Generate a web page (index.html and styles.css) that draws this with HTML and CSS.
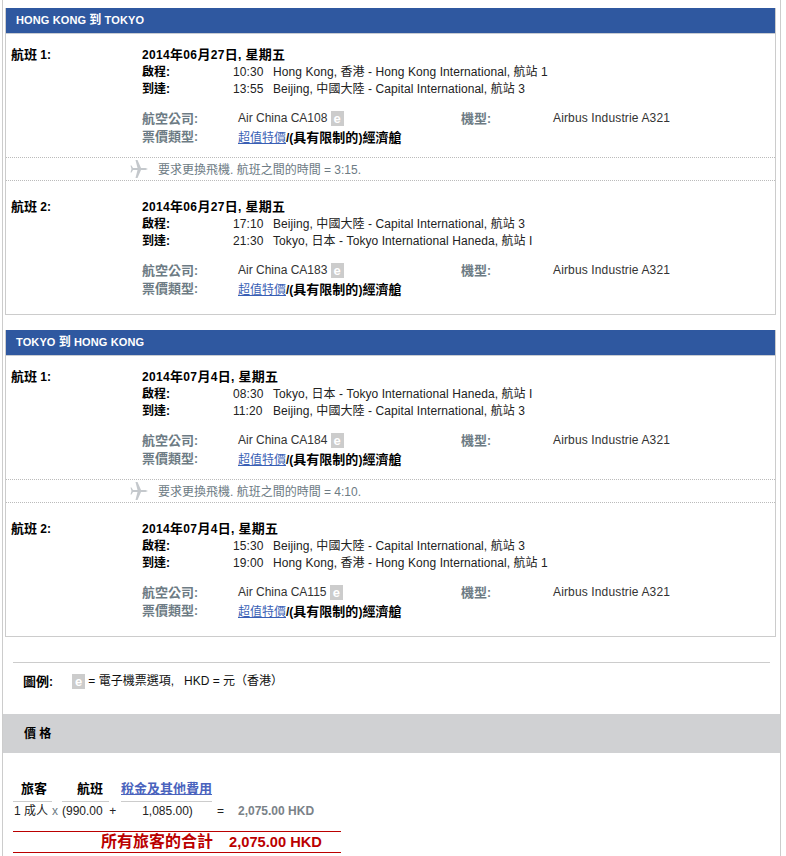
FILE: index.html
```html
<!DOCTYPE html>
<html lang="zh-Hant">
<head>
<meta charset="utf-8">
<title>航班</title>
<link rel="stylesheet" href="styles.css">
</head>
<body>
<div class="frame">
  <section class="card">
    <h2 class="card-head">HONG KONG <span class="zh12">到</span> TOKYO</h2>
    <div class="leg">
      <div class="leg-no"><span class="zh">航班</span> 1:</div>
      <div class="leg-main">
        <div class="date">2014<span class="zh">年</span>06<span class="zh">月</span>27<span class="zh">日</span>, <span class="zh">星期五</span></div>
        <div class="stop"><b>啟程:</b><span class="time">10:30</span><span>Hong Kong, 香港 - Hong Kong International, 航站 1</span></div>
        <div class="stop"><b>到達:</b><span class="time">13:55</span><span>Beijing, 中國大陸 - Capital International, 航站 3</span></div>
        <div class="info"><b class="lbl"><span class="zh">航空公司</span>:</b><span class="val">Air China CA108 <i class="e">e</i></span><b class="lbl lbl2"><span class="zh">機型</span>:</b><span class="model">Airbus Industrie A321</span></div>
        <div class="info fare"><b class="lbl"><span class="zh">票價類型</span>:</b><span class="val"><a href="#">超值特價</a><b>/(<span class="zh">具有限制的</span>)<span class="zh">經濟艙</span></b></span></div>
      </div>
    </div>
    <div class="change"><svg class="plane" viewBox="0 0 18 18"><path d="M18 9 15.500 8H11L7.500 0h-2l2 8H3L1.500 5.500h-1l1 3.500-1 3.500h1L3 10h4.500l-2 8h2L11 10h4.500z"/></svg><span class="change-text">要求更換飛機. 航班之間的時間 = 3:15.</span></div>
    <div class="leg leg-next">
      <div class="leg-no"><span class="zh">航班</span> 2:</div>
      <div class="leg-main">
        <div class="date">2014<span class="zh">年</span>06<span class="zh">月</span>27<span class="zh">日</span>, <span class="zh">星期五</span></div>
        <div class="stop"><b>啟程:</b><span class="time">17:10</span><span>Beijing, 中國大陸 - Capital International, 航站 3</span></div>
        <div class="stop"><b>到達:</b><span class="time">21:30</span><span>Tokyo, 日本 - Tokyo International Haneda, 航站 I</span></div>
        <div class="info"><b class="lbl"><span class="zh">航空公司</span>:</b><span class="val">Air China CA183 <i class="e">e</i></span><b class="lbl lbl2"><span class="zh">機型</span>:</b><span class="model">Airbus Industrie A321</span></div>
        <div class="info fare"><b class="lbl"><span class="zh">票價類型</span>:</b><span class="val"><a href="#">超值特價</a><b>/(<span class="zh">具有限制的</span>)<span class="zh">經濟艙</span></b></span></div>
      </div>
    </div>
  </section>

  <section class="card card-2">
    <h2 class="card-head">TOKYO <span class="zh12">到</span> HONG KONG</h2>
    <div class="leg">
      <div class="leg-no"><span class="zh">航班</span> 1:</div>
      <div class="leg-main">
        <div class="date">2014<span class="zh">年</span>07<span class="zh">月</span>4<span class="zh">日</span>, <span class="zh">星期五</span></div>
        <div class="stop"><b>啟程:</b><span class="time">08:30</span><span>Tokyo, 日本 - Tokyo International Haneda, 航站 I</span></div>
        <div class="stop"><b>到達:</b><span class="time">11:20</span><span>Beijing, 中國大陸 - Capital International, 航站 3</span></div>
        <div class="info"><b class="lbl"><span class="zh">航空公司</span>:</b><span class="val">Air China CA184 <i class="e">e</i></span><b class="lbl lbl2"><span class="zh">機型</span>:</b><span class="model">Airbus Industrie A321</span></div>
        <div class="info fare"><b class="lbl"><span class="zh">票價類型</span>:</b><span class="val"><a href="#">超值特價</a><b>/(<span class="zh">具有限制的</span>)<span class="zh">經濟艙</span></b></span></div>
      </div>
    </div>
    <div class="change"><svg class="plane" viewBox="0 0 18 18"><path d="M18 9 15.500 8H11L7.500 0h-2l2 8H3L1.500 5.500h-1l1 3.500-1 3.500h1L3 10h4.500l-2 8h2L11 10h4.500z"/></svg><span class="change-text">要求更換飛機. 航班之間的時間 = 4:10.</span></div>
    <div class="leg leg-next">
      <div class="leg-no"><span class="zh">航班</span> 2:</div>
      <div class="leg-main">
        <div class="date">2014<span class="zh">年</span>07<span class="zh">月</span>4<span class="zh">日</span>, <span class="zh">星期五</span></div>
        <div class="stop"><b>啟程:</b><span class="time">15:30</span><span>Beijing, 中國大陸 - Capital International, 航站 3</span></div>
        <div class="stop"><b>到達:</b><span class="time">19:00</span><span>Hong Kong, 香港 - Hong Kong International, 航站 1</span></div>
        <div class="info"><b class="lbl"><span class="zh">航空公司</span>:</b><span class="val">Air China CA115 <i class="e">e</i></span><b class="lbl lbl2"><span class="zh">機型</span>:</b><span class="model">Airbus Industrie A321</span></div>
        <div class="info fare"><b class="lbl"><span class="zh">票價類型</span>:</b><span class="val"><a href="#">超值特價</a><b>/(<span class="zh">具有限制的</span>)<span class="zh">經濟艙</span></b></span></div>
      </div>
    </div>
  </section>

  <div class="legend">
    <b class="legend-title"><span class="zh">圖例</span>:</b>
    <span><i class="e">e</i> = 電子機票選項,&nbsp;&nbsp;&nbsp;HKD&nbsp;= 元（香港）</span>
  </div>

  <div class="price-bar"><b>價 格</b></div>

  <div class="price">
    <div class="price-row price-head">
      <b class="c1">旅客</b><b class="cx"></b><b class="c2">航班</b><a class="c3" href="#">稅金及其他費用</a>
    </div>
    <div class="price-row price-vals">
      <span class="c1">1 成人</span><span class="cx">x</span><span class="c2">(990.00&nbsp;&nbsp;+</span><span class="c3 num">1,085.00)</span><span class="eq">=</span><span class="sum">2,075.00 HKD</span>
    </div>
    <div class="total"><span class="total-zh">所有旅客的合計</span><span>2,075.00 HKD</span></div>
  </div>
</div>
</body>
</html>
```
FILE: styles.css
```css
* { box-sizing: border-box; }
html, body { margin: 0; padding: 0; background: #fff; }
body {
  width: 786px;
  height: 856px;
  overflow: hidden;
  font: 12px/17px "Liberation Sans", "Noto Sans CJK TC", sans-serif;
  color: #222;
}
b { color: #000; }
.zh { font-size: 13px; }
.zh12 { font-size: 12px; }
.frame {
  margin-left: 2px;
  width: 779px;
  height: 856px;
  padding: 8px 5px 0 2px;
  border-left: 1px solid #ccc;
  border-right: 1px solid #ccc;
}
.card { width: 771px; height: 307px; border: 1px solid #ccc; border-top: 0; }
.card-2 { margin-top: 15px; }
.card-head {
  margin: 0;
  height: 26px;
  padding-left: 10px;
  background: #2f58a0;
  border-bottom: 1px solid #c8ccd2;
  color: #fff;
  font-size: 11px;
  font-weight: bold;
  line-height: 25px;
  letter-spacing: .12px;
}
.leg { display: flex; padding: 13px 5px 0; height: 123px; }
.leg-next { padding-top: 18px; height: 133px; }
.leg-no { width: 131px; height: 16px; margin-top: -1px; font-weight: bold; color: #000; }
.leg-main { flex: 1; }
.date { height: 18px; margin-top: -1px; font-weight: bold; color: #000; letter-spacing: .33px; }
.stop { display: flex; letter-spacing: .075px; }
.stop b { width: 91px; letter-spacing: 0; }
.time { width: 40px; }
.info { display: flex; margin-top: 12px; height: 17px; color: #333; }
.fare { margin-top: 2px; }
.fare .lbl { margin-top: -1px; }
.lbl { width: 96px; color: #6d7b84; }
.val { width: 223px; }
.lbl2 { width: 92px; }
.model { letter-spacing: .14px; }
.val a { color: #3a5fb5; }
.e {
  display: inline-block;
  width: 13px;
  height: 15px;
  background: #ccc;
  color: #fff;
  font: bold 13px/15px "Liberation Sans", sans-serif;
  text-align: center;
  vertical-align: top;
  margin-top: 1px;
}
.change {
  display: flex;
  align-items: center;
  height: 24px;
  padding-left: 124px;
  border-top: 1px dotted #bbb;
  border-bottom: 1px dotted #bbb;
  color: #6d7b84;
}
.change-text { padding-top: 2px; }
.plane { width: 18px; height: 18px; margin-right: 10px; fill: #c4c8cc; }
.legend {
  display: flex;
  margin: 25px 0 0 8px;
  width: 757px;
  height: 52px;
  padding: 10px 0 0 10px;
  border-top: 1px solid #ccc;
  color: #111;
}
.legend-title { width: 49px; }
.price-bar {
  height: 39px;
  margin: 0 -5px 0 -2px;
  padding-left: 21px;
  background: #d0d1d3;
  line-height: 40px;
}
.price { padding: 26px 0 0 8px; }
.price-row { display: flex; }
.price-head { height: 22px; align-items: flex-end; padding-bottom: 4px; font-size: 13px; }
.c1 { width: 39px; text-align: center; }
.cx { width: 10px; }
.c2 { width: 47px; white-space: nowrap; }
.c3 { width: 91px; margin-left: 12px; white-space: nowrap; }
.price-head .c1 { padding-left: 3px; }
.price-head .c2 { text-align: right; padding-right: 6px; }
.price-head .c3 { color: #4a63bd; font-weight: bold; }
.price-vals { height: 30px; line-height: 18px; }
.price-vals .c1 { text-align: left; padding-left: 1px; }
.price-vals .c1, .price-vals .c2, .price-vals .c3 { height: 19px; border-top: 1px solid #ccc; }
.price-vals .cx { padding-top: 1px; color: #6d7b84; }
.num { text-align: center; padding-left: 2px; }
.eq { width: 26px; padding: 1px 0 0 5px; }
.sum { padding-top: 1px; color: #7a8288; font-weight: bold; }
.total {
  display: flex;
  gap: 16px;
  width: 328px;
  height: 22px;
  padding-left: 88px;
  border-top: 1px solid #b00;
  border-bottom: 1px solid #b00;
  color: #b00;
  font: bold 14.67px/20px "Liberation Sans", "Noto Sans CJK TC", sans-serif;
}
.total-zh { font-size: 16px; }
```
